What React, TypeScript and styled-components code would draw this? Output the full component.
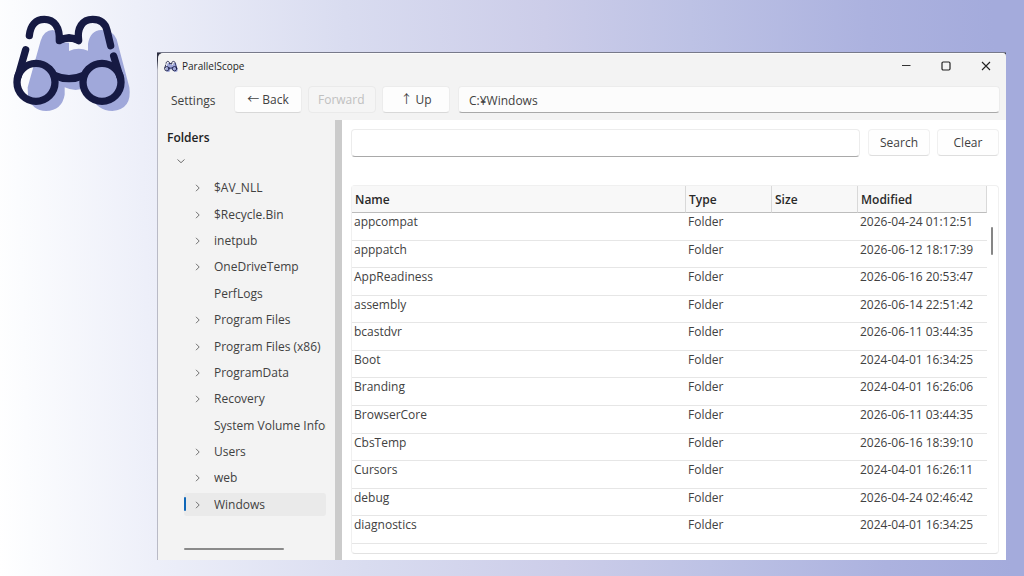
import React from "react";
import styled, { createGlobalStyle } from "styled-components";

const GlobalStyle = createGlobalStyle`
  *, *::before, *::after { box-sizing: border-box; }
  body {
    margin: 0;
    font-family: "Open Sans", "Noto Sans", "Noto Sans CJK JP", sans-serif;
    font-size: 12px;
    line-height: 16px;
    color: #414141;
  }
  button, input { font: inherit; color: inherit; }
`;

const Page = styled.div`
  display: flex;
  min-height: 100vh;
  background: linear-gradient(88deg, #ffffff 0%, #fbfcfe 3%, #edeff9 15%, #d9dcf0 35%, #cccde9 54%, #bdc2e5 68%, #acb2df 85%, #a4abdc 97%);
`;

const Brand = styled.div`
  flex: 0 0 157px;
`;

const Frame = styled.div`
  flex: 1;
  min-width: 0;
  margin: 52px 18px 16px 0;
  display: flex;
  padding: 1px 0 0 1px;
  background: linear-gradient(#77798a 0 1px, #2d2f40 1px 8px, #b9bac6 18px);
`;

const AppWindow = styled.main`
  flex: 1;
  min-width: 0;
  display: flex;
  flex-direction: column;
  background: #f3f3f3;
  border-top: 1px solid #fafafa;
  border-radius: 5px 3px 0 0;
  overflow: hidden;
`;

const TitleBar = styled.header`
  display: flex;
  align-items: center;
  height: 24px;
  padding: 0 7px 0 6px;
  font-size: 10px;
  color: #1f1f1f;
`;

const Title = styled.h1`
  margin: 0 auto 0 4px;
  font: inherit;
`;

const CaptionButton = styled.button`
  display: flex;
  justify-content: center;
  width: 40px;
  padding: 0;
  border: 0;
  background: none;

  &:last-child { margin-right: -7px; }
`;

const Toolbar = styled.nav`
  display: flex;
  align-items: flex-start;
  gap: 6px;
  height: 42px;
  padding: 8px 6px 0 4px;
`;

const Button = styled.button<{ $width: number }>`
  flex: 0 0 ${(p) => p.$width}px;
  height: 27px;
  padding: 1px 0 0;
  border: 1px solid #ececec;
  border-bottom-color: #d8d8d8;
  border-radius: 4px;
  background: #fdfdfd;
  white-space: pre;
  overflow: hidden;

  &:disabled {
    padding: 1px 9px 0;
    text-align: left;
    border-color: #eaeaea;
    background: #f5f5f5;
    color: #c0c0c0;
  }
`;

const SearchButton = styled(Button)`
  border-color: #f0f0f0;
  border-bottom-color: #dedede;
  background: #fefefe;
`;

const ButtonLabel = styled.span`
  display: block;
  overflow: hidden;
`;

const MenuButton = styled.button`
  flex: 0 0 66px;
  height: 27px;
  padding: 2px 0 0 9px;
  border: 0;
  background: none;
  text-align: left;
`;

const TextBox = styled.input`
  flex: 1;
  min-width: 0;
  height: 27px;
  padding: 1px 10px 0;
  border: 1px solid #ececec;
  border-bottom-color: #a9a9a9;
  border-radius: 4px;
  background: #fcfcfc;
  outline: none;
`;

const PathBox = styled(TextBox)`
  margin-left: 2px;
`;

const Body = styled.div`
  flex: 1;
  display: flex;
  min-height: 0;
`;

const Sidebar = styled.aside`
  flex: 0 0 177px;
  display: flex;
  flex-direction: column;
  padding: 9px 9px 10px 9px;
`;

const SidebarTitle = styled.h2`
  margin: 0;
  font-size: 12px;
  line-height: 18px;
  font-weight: 600;
  color: #222;
`;

const RootToggle = styled.button`
  display: flex;
  align-items: center;
  width: 26px;
  height: 28px;
  padding: 0 0 0 10px;
  border: 0;
  background: none;
`;

const Tree = styled.ul`
  flex: 1;
  display: flex;
  flex-direction: column;
  margin: 0 0 0 17px;
  padding: 0;
  list-style: none;
`;

const TreeItem = styled.li`
  flex: 1;
  min-height: 26px;
  display: flex;
  align-items: center;
`;

const TreeRow = styled.button<{ $selected: boolean }>`
  position: relative;
  display: grid;
  grid-template-columns: 20px 1fr;
  align-items: center;
  width: 100%;
  height: 23px;
  padding: 0 0 0 10px;
  border: 0;
  border-radius: 3px;
  background: ${(p) => (p.$selected ? "#eaeaea" : "none")};
  text-align: left;
  white-space: nowrap;
  overflow: hidden;

  &::before {
    content: "";
    display: ${(p) => (p.$selected ? "block" : "none")};
    position: absolute;
    left: 0;
    top: 4px;
    bottom: 5px;
    width: 2px;
    border-radius: 1px;
    background: #0f67b8;
  }
`;

const TreeLabel = styled.span`
  grid-column: 2;
  overflow: hidden;
`;

const TreeScroll = styled.div`
  width: 100px;
  height: 2px;
  margin: 30px 0 0 17px;
  border-radius: 1px;
  background: #8a8a8a;
`;

const Splitter = styled.div`
  flex: 0 0 7px;
  background: #cbcbcb;
`;

const Content = styled.section`
  flex: 1;
  min-width: 0;
  display: flex;
  flex-direction: column;
  gap: 28px;
  padding: 9px 7px 6px 9px;
  background: #fff;
`;

const SearchBar = styled.form`
  display: flex;
  gap: 7px;
`;

const SearchBox = styled(TextBox)`
  height: 28px;
  margin-right: 1px;
  background: #fff;
`;

const Panel = styled.div`
  position: relative;
  flex: 1;
  display: flex;
  padding: 0 11px 9px 0;
  border: 1px solid #f0f0f0;
  border-bottom-color: #e2e2e2;
  border-radius: 4px;
`;

const PanelScroll = styled.div`
  position: absolute;
  right: 5px;
  top: 41px;
  width: 2px;
  height: 28px;
  border-radius: 1px;
  background: #868686;
`;

const FileTable = styled.table`
  flex: 1;
  min-width: 0;
  table-layout: fixed;
  border-collapse: separate;
  border-spacing: 0;
`;

const HeadCell = styled.th<{ $width?: number }>`
  width: ${(p) => (p.$width ? `${p.$width}px` : "auto")};
  height: 27px;
  padding: 1px 3px 0;
  border-right: 1px solid #d9d9d9;
  border-bottom: 1px solid #bdbdbd;
  background: #f8f8f8;
  text-align: left;
  font-weight: 600;
  color: #2a2a2a;
`;

const Cell = styled.td`
  height: 27px;
  padding: 1px 2px 0;
  border-bottom: 1px solid #e6e6e6;
  vertical-align: top;
  white-space: nowrap;
`;

const folders = [
  { name: "$AV_NLL", expandable: true },
  { name: "$Recycle.Bin", expandable: true },
  { name: "inetpub", expandable: true },
  { name: "OneDriveTemp", expandable: true },
  { name: "PerfLogs", expandable: false },
  { name: "Program Files", expandable: true },
  { name: "Program Files (x86)", expandable: true },
  { name: "ProgramData", expandable: true },
  { name: "Recovery", expandable: true },
  { name: "System Volume Information", expandable: false },
  { name: "Users", expandable: true },
  { name: "web", expandable: true },
  { name: "Windows", expandable: true },
];

const files = [
  ["appcompat", "2026-04-24 01:12:51"],
  ["apppatch", "2026-06-12 18:17:39"],
  ["AppReadiness", "2026-06-16 20:53:47"],
  ["assembly", "2026-06-14 22:51:42"],
  ["bcastdvr", "2026-06-11 03:44:35"],
  ["Boot", "2024-04-01 16:34:25"],
  ["Branding", "2024-04-01 16:26:06"],
  ["BrowserCore", "2026-06-11 03:44:35"],
  ["CbsTemp", "2026-06-16 18:39:10"],
  ["Cursors", "2024-04-01 16:26:11"],
  ["debug", "2026-04-24 02:46:42"],
  ["diagnostics", "2024-04-01 16:34:25"],
];

function Binoculars({ width, height, viewBox }: { width: number; height: number; viewBox: string }) {
  return (
    <svg width={width} height={height} viewBox={viewBox} aria-hidden="true">
      <path
        fill="#a0a8da"
        d="M83 262 L122 122 Q132 90 158 90 Q176 92 180 126 L207 128 V153 Q235 140 264 152 V132 Q270 92 304 90 Q342 92 350 118 L388 262 Q397 328 337 333 Q292 332 272 288 L258 262 Q228 278 194 262 V284 Q186 331 138 333 Q96 331 84 290 Z"
      />
      <g fill="none" stroke="#161a43" strokeWidth="22" strokeLinecap="round" strokeLinejoin="round">
        <path d="M88 107 C91 76 107 58 133 58 C163 58 180 82 178 122 Q207 104 236 122 C230 83 248 58 278 58 C302 58 316 70 321 91 L332 137" />
        <path fill="#161a43" stroke="none" d="M178 122 Q207 104 236 122 V131 Q207 119 178 131 Z" />
        <circle cx="108" cy="247" r="57" />
        <circle cx="306" cy="247" r="57" />
        <path d="M77 149 L54 230 M341 168 L360 230 M163 226 Q207 246 251 226" />
      </g>
    </svg>
  );
}

function Chevron({ down = false }: { down?: boolean }) {
  return (
    <svg width="8" height="8" viewBox="0 0 8 8" fill="none" stroke="#707070" aria-hidden="true">
      <path d={down ? "M0.5 2.5 L4 5.7 L7.5 2.5" : "M2 0.8 L5.2 4 L2 7.2"} />
    </svg>
  );
}

export default function App() {
  return (
    <>
      <GlobalStyle />
      <Page>
        <Brand>
          <Binoculars width={150} height={120} viewBox="0 0 450 360" />
        </Brand>
        <Frame>
          <AppWindow>
            <TitleBar>
              <Binoculars width={14} height={13} viewBox="34 40 362 300" />
              <Title>ParallelScope</Title>
              <CaptionButton aria-label="Minimize">
                <svg width="10" height="10" viewBox="0 0 10 10" stroke="#333">
                  <path d="M1 4.5 H9.5" />
                </svg>
              </CaptionButton>
              <CaptionButton aria-label="Maximize">
                <svg width="10" height="10" viewBox="0 0 10 10" fill="none" stroke="#222" strokeWidth="1.2">
                  <rect x="1" y="1" width="8" height="8" rx="1.2" />
                </svg>
              </CaptionButton>
              <CaptionButton aria-label="Close">
                <svg width="10" height="10" viewBox="0 0 10 10" stroke="#222" strokeWidth="1.1">
                  <path d="M1 1 L9 9 M9 1 L1 9" />
                </svg>
              </CaptionButton>
            </TitleBar>
            <Toolbar>
              <MenuButton>Settings</MenuButton>
              <Button $width={68}>← Back</Button>
              <Button $width={68} disabled>
                <ButtonLabel>Forward →</ButtonLabel>
              </Button>
              <Button $width={68}>↑ Up</Button>
              <PathBox aria-label="Path" defaultValue="C:¥Windows" />
            </Toolbar>
            <Body>
              <Sidebar>
                <SidebarTitle>Folders</SidebarTitle>
                <RootToggle aria-label="Collapse drive">
                  <Chevron down />
                </RootToggle>
                <Tree>
                  {folders.map((f) => (
                    <TreeItem key={f.name}>
                      <TreeRow $selected={f.name === "Windows"}>
                        {f.expandable && <Chevron />}
                        <TreeLabel>{f.name}</TreeLabel>
                      </TreeRow>
                    </TreeItem>
                  ))}
                </Tree>
                <TreeScroll />
              </Sidebar>
              <Splitter />
              <Content>
                <SearchBar onSubmit={(e) => e.preventDefault()}>
                  <SearchBox aria-label="Search text" />
                  <SearchButton $width={62}>Search</SearchButton>
                  <SearchButton $width={62} type="button">Clear</SearchButton>
                </SearchBar>
                <Panel>
                  <FileTable>
                    <thead>
                      <tr>
                        <HeadCell>Name</HeadCell>
                        <HeadCell $width={86}>Type</HeadCell>
                        <HeadCell $width={86}>Size</HeadCell>
                        <HeadCell $width={129}>Modified</HeadCell>
                      </tr>
                    </thead>
                    <tbody>
                      {files.map(([name, modified]) => (
                        <tr key={name}>
                          <Cell>{name}</Cell>
                          <Cell>Folder</Cell>
                          <Cell />
                          <Cell>{modified}</Cell>
                        </tr>
                      ))}
                    </tbody>
                  </FileTable>
                  <PanelScroll />
                </Panel>
              </Content>
            </Body>
          </AppWindow>
        </Frame>
      </Page>
    </>
  );
}
